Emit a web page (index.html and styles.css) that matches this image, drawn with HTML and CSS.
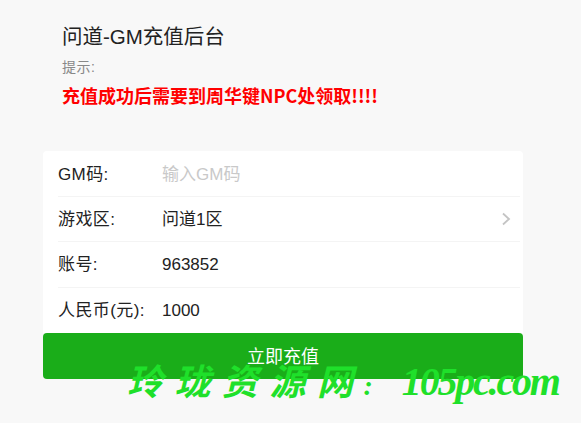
FILE: index.html
```html
<!DOCTYPE html>
<html lang="zh-CN">
<head>
<meta charset="utf-8">
<title>问道-GM充值后台</title>
<link rel="stylesheet" href="styles.css">
</head>
<body>
<header class="head">
  <h1 class="title">问道-GM充值后台</h1>
  <p class="hint">提示:</p>
  <p class="notice">充值成功后需要到周华键NPC处领取!!!!</p>
</header>
<form class="form">
  <div class="row">
    <label class="label">GM码:</label>
    <span class="value placeholder">输入GM码</span>
  </div>
  <div class="row">
    <label class="label">游戏区:</label>
    <span class="value">问道1区</span>
    <svg class="chevron" width="10" height="14" viewBox="0 0 10 14"><path d="M2 1.5 8 7l-6 5.500" fill="none" stroke="#c4c4c4" stroke-width="1.800"/></svg>
  </div>
  <div class="row">
    <label class="label">账号:</label>
    <span class="value">963852</span>
  </div>
  <div class="row">
    <label class="label">人民币(元):</label>
    <span class="value">1000</span>
  </div>
</form>
<button class="submit" type="button">立即充值</button>
<div class="watermark"><span class="mark-cn">玲珑资源网</span><span class="mark-colon">:</span><span class="mark-en">105pc.com</span></div>
</body>
</html>
```
FILE: styles.css
```css
* { box-sizing: border-box; }
html, body { height: 100%; }
body {
  margin: 0;
  background: #f8f8f8;
  font-family: "Liberation Sans", "Noto Sans CJK SC", sans-serif;
  color: #222;
  overflow: hidden;
  position: relative;
}
.head { padding: 23px 0 0 62px; height: 151px; }
.title { margin: 0; font-size: 20.500px; font-weight: 400; line-height: 28px; color: #222; }
.hint { margin: 7px 0 0; font-size: 14px; line-height: 18px; color: #888; letter-spacing: 0.500px; }
.notice { margin: 7px 0 0; font-family: "Noto Sans CJK SC", sans-serif; font-size: 18px; font-weight: 700; line-height: 24px; color: #f00; }
.form { margin: 0 58px 0 43px; background: #fff; border-radius: 4px 4px 0 0; height: 182px; padding-left: 15px; }
.row { display: flex; align-items: baseline; height: 45.500px; padding: 11px 10px 0 0; line-height: 24px; border-bottom: 1px solid #f4f4f4; font-size: 17px; margin-right: 3px; }
.row:first-child { padding-top: 12px; }
.row:last-child { border-bottom: 0; }
.label { width: 104px; flex: none; letter-spacing: 0.400px; }
.value { flex: 1; }
.placeholder { color: #c9c9c9; }
.chevron { flex: none; margin-right: -1px; align-self: center; margin-top: -11px; }
.submit { display: block; margin: 0 0 0 43px; width: 480px; height: 46px; padding: 0 0 3px; border: 0; border-radius: 4px; background: #1aad19; color: #fff; font: 400 18px "Noto Sans CJK SC", sans-serif; }
.watermark { position: absolute; left: 127px; top: 357px; display: flex; align-items: baseline; white-space: nowrap; line-height: 44px; font-style: italic; color: #1fe02a; }
.mark-cn { font-family: "Noto Sans CJK SC", sans-serif; font-size: 36px; font-weight: 700; letter-spacing: 11.500px; }
.mark-colon { font-family: "Liberation Serif", serif; font-size: 28px; font-weight: 700; margin-left: -1px; }
.mark-en { font-family: "Liberation Serif", serif; font-size: 40px; font-weight: 700; letter-spacing: -2.200px; margin-left: 29px; }
```
